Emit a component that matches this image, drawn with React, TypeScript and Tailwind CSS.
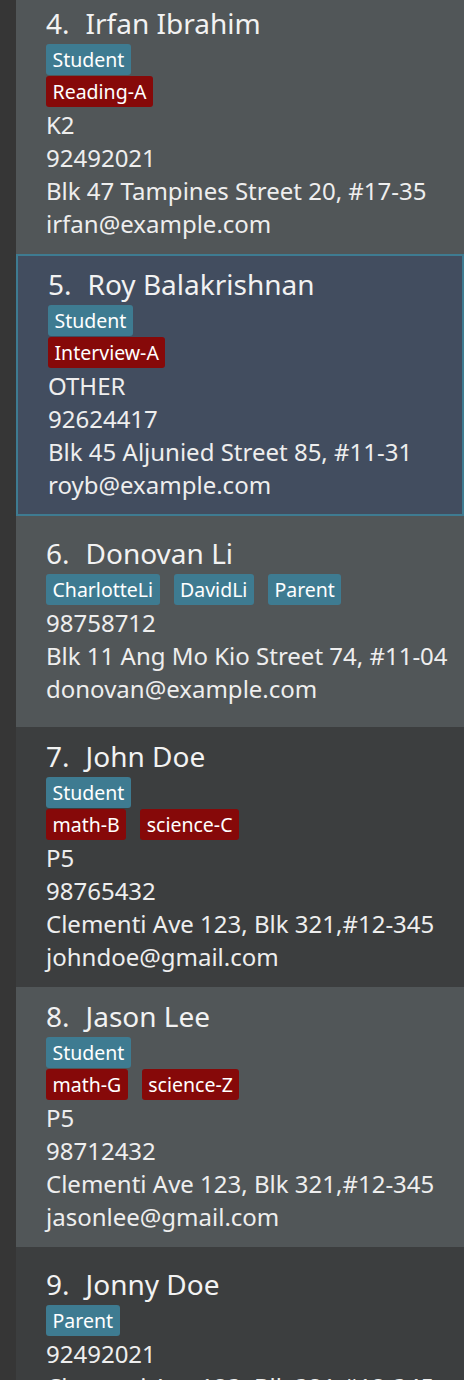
import React from "react";

type Tag = { label: string; kind: "blue" | "red" };
type Person = {
  id: number;
  name: string;
  roles: string[];
  subjects: string[];
  level?: string;
  phone: string;
  address: string;
  email: string;
  bg: string;
  selected?: boolean;
};

const people: Person[] = [
  { id: 4, name: "Irfan Ibrahim", roles: ["Student"], subjects: ["Reading-A"], level: "K2", phone: "92492021", address: "Blk 47 Tampines Street 20, #17-35", email: "irfan@example.com", bg: "light" },
  { id: 5, name: "Roy Balakrishnan", roles: ["Student"], subjects: ["Interview-A"], level: "OTHER", phone: "92624417", address: "Blk 45 Aljunied Street 85, #11-31", email: "royb@example.com", bg: "sel", selected: true },
  { id: 6, name: "Donovan Li", roles: ["CharlotteLi", "DavidLi", "Parent"], subjects: [], phone: "98758712", address: "Blk 11 Ang Mo Kio Street 74, #11-04", email: "donovan@example.com", bg: "light" },
  { id: 7, name: "John Doe", roles: ["Student"], subjects: ["math-B", "science-C"], level: "P5", phone: "98765432", address: "Clementi Ave 123, Blk 321,#12-345", email: "johndoe@gmail.com", bg: "dark" },
  { id: 8, name: "Jason Lee", roles: ["Student"], subjects: ["math-G", "science-Z"], level: "P5", phone: "98712432", address: "Clementi Ave 123, Blk 321,#12-345", email: "jasonlee@gmail.com", bg: "light" },
  { id: 9, name: "Jonny Doe", roles: ["Parent"], subjects: [], phone: "92492021", address: "Clementi Ave 123, Blk 321,#12-345", email: "jonnydoe@gmail.com", bg: "dark" },
];

function TagChip({ t }: { t: Tag }) {
  return (
    <span
      className={
        "h-[31px] flex items-center px-[6.5px] rounded-[3px] text-[19.5px] leading-none text-white " +
        (t.kind === "blue" ? "bg-[#3e7b91]" : "bg-[#860909]")
      }
    >
      {t.label}
    </span>
  );
}

function TagRow({ tags }: { tags: Tag[] }) {
  return (
    <div className="h-[32px] flex items-start gap-[14px]">
      {tags.map((t) => (
        <TagChip key={t.label} t={t} />
      ))}
    </div>
  );
}

function Card({ p }: { p: Person }) {
  const bgClass =
    p.bg === "light" ? "bg-[#515658]" : p.bg === "dark" ? "bg-[#3c3e3f]" : "bg-[#424d5f]";
  const lines = [p.level, p.phone, p.address, p.email].filter(Boolean) as string[];
  return (
    <div
      className={
        "shrink-0 min-h-[211px] flex flex-col justify-center pl-[30px] " +
        bgClass +
        (p.selected ? " border-2 border-[#3e7b91] pt-[10px] pb-[13px]" : " pt-[11px] pb-[14px]")
      }
    >
      <div className="h-[36px] flex items-center gap-[16px] text-[28px] leading-[36px] text-[#f2f2f2]">
        <span>{p.id}.</span>
        <span>{p.name}</span>
      </div>
      <div className="mt-[3px]">
        <TagRow tags={p.roles.map((r) => ({ label: r, kind: "blue" as const }))} />
        {p.subjects.length > 0 && (
          <TagRow tags={p.subjects.map((s) => ({ label: s, kind: "red" as const }))} />
        )}
      </div>
      <div className="text-[24px] leading-[33px] text-[#eeeeee]">
        {lines.map((l, i) => (
          <div key={i} className="h-[33px] whitespace-nowrap">
            {l}
          </div>
        ))}
      </div>
    </div>
  );
}

export default function App() {
  return (
    <div
      className="w-[464px] h-[1380px] overflow-hidden flex bg-[#363636]"
      style={{ fontFamily: '"Noto Sans", "Open Sans", sans-serif' }}
    >
      <div className="w-[16px] shrink-0 bg-[#363636]" />
      <div className="flex-1 flex flex-col -mt-[6px]">
        {people.map((p) => (
          <Card key={p.id} p={p} />
        ))}
      </div>
    </div>
  );
}
